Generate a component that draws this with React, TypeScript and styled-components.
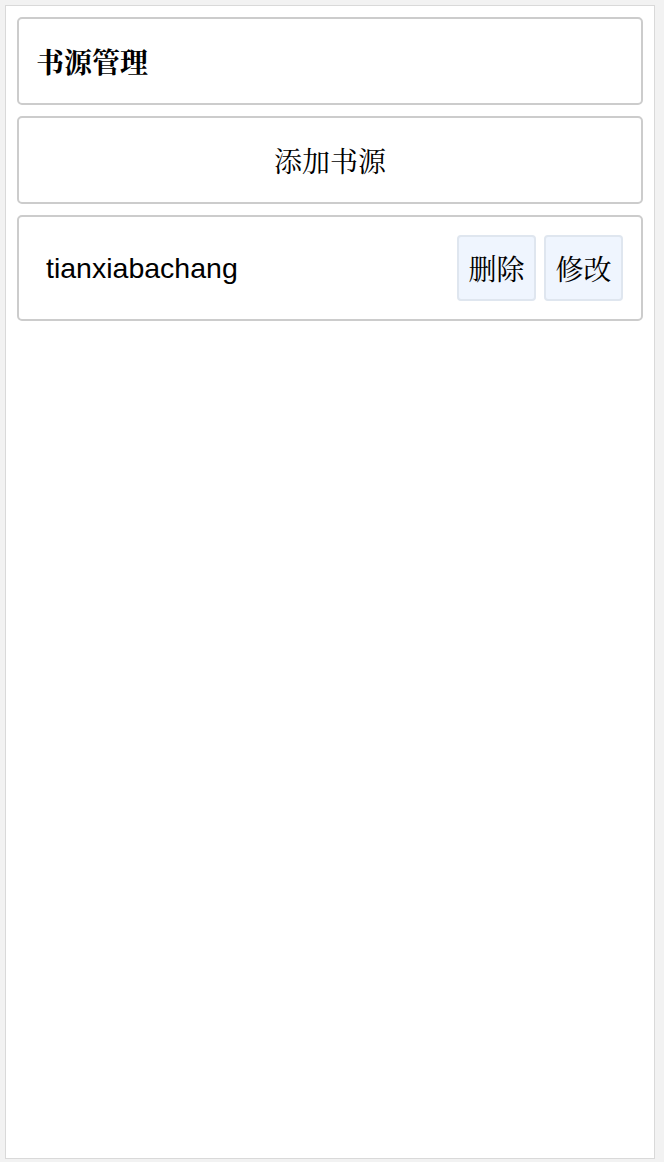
import React from "react";
import styled, { createGlobalStyle } from "styled-components";

const GlobalStyle = createGlobalStyle`
  html, body {
    margin: 0;
    padding: 0;
    background: #f2f2f2;
  }
  * {
    box-sizing: border-box;
  }
`;

const Page = styled.div`
  margin: 5px 9px 3px 5px;
  min-height: 1154px;
  background: #ffffff;
  border: 1px solid #d9d9d9;
  padding: 11px;
  display: flex;
  flex-direction: column;
  gap: 11px;
  font-family: "Liberation Serif", "Noto Serif CJK SC", "Noto Sans CJK SC", serif;
  color: #000;
`;

const Card = styled.div<{ $center?: boolean }>`
  border: 2px solid #cccccc;
  border-radius: 5px;
  background: #fff;
  display: flex;
  align-items: center;
  justify-content: ${({ $center }) => ($center ? "center" : "flex-start")};
  min-height: 88px;
  padding: 0 17px;
`;

const Title = styled.h1`
  margin: 0;
  font-size: 28px;
  font-weight: bold;
`;

const AddText = styled.span`
  font-size: 28px;
`;

const SourceRow = styled(Card)`
  min-height: 106px;
  padding: 0 18px 0 27px;
  justify-content: space-between;
`;

const SourceName = styled.span`
  font-family: "Liberation Sans", Arial, sans-serif;
  font-size: 28.5px;
`;

const Actions = styled.div`
  display: flex;
  gap: 8px;
`;

const ActionButton = styled.button`
  font-family: "Liberation Serif", "Noto Serif CJK SC", "Noto Sans CJK SC", serif;
  font-size: 28px;
  color: #000;
  background: #eff5fe;
  border: 2px solid #dfe6ef;
  border-radius: 4px;
  height: 66px;
  padding: 0 9.5px;
  cursor: pointer;
`;

export default function App() {
  return (
    <>
      <GlobalStyle />
      <Page>
        <Card>
          <Title>书源管理</Title>
        </Card>
        <Card $center>
          <AddText>添加书源</AddText>
        </Card>
        <SourceRow>
          <SourceName>tianxiabachang</SourceName>
          <Actions>
            <ActionButton>删除</ActionButton>
            <ActionButton>修改</ActionButton>
          </Actions>
        </SourceRow>
      </Page>
    </>
  );
}
